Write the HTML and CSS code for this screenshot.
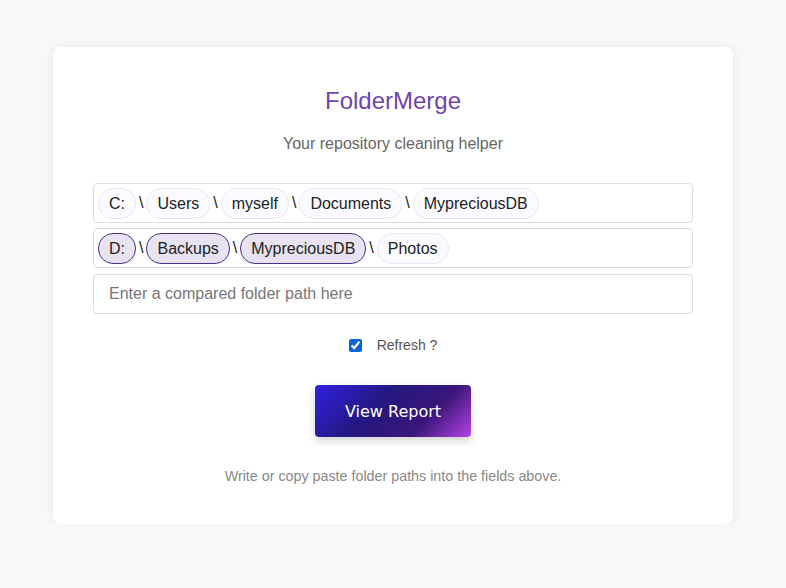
FILE: index.html
```html
<!DOCTYPE html>
<html>
<head>
<meta charset="utf-8">
<link rel="stylesheet" href="styles.css">
</head>
<body>
<main class="card">
  <h1 class="title">FolderMerge</h1>
  <p class="subtitle">Your repository cleaning helper</p>
  <div class="fields">
    <div class="path">
      <span class="chip">C:</span><span class="sep">\</span>
      <span class="chip">Users</span><span class="sep">\</span>
      <span class="chip">myself</span><span class="sep">\</span>
      <span class="chip">Documents</span><span class="sep">\</span>
      <span class="chip">MypreciousDB</span>
    </div>
    <div class="path">
      <span class="chip chip-match">D:</span><span class="sep">\</span>
      <span class="chip chip-match">Backups</span><span class="sep">\</span>
      <span class="chip chip-match">MypreciousDB</span><span class="sep">\</span>
      <span class="chip">Photos</span>
    </div>
    <input class="path-input" type="text" placeholder="Enter a compared folder path here">
  </div>
  <label class="refresh"><input type="checkbox" checked><span>Refresh ?</span></label>
  <button class="report">View Report</button>
  <p class="hint">Write or copy paste folder paths into the fields above.</p>
</main>
</body>
</html>
```

FILE: styles.css
```css
html, body {
  margin: 0;
  padding: 0;
}
body {
  background: #f8f8f8;
  font-family: "Liberation Sans", Arial, sans-serif;
  padding-top: 47px;
}
.card {
  width: 600px;
  margin: 0 0 0 53px;
  background: #fff;
  border-radius: 8px;
  box-shadow: 0 0 10px rgba(0, 0, 0, 0.07);
  padding: 40px 40px 39px;
  display: flex;
  flex-direction: column;
  align-items: center;
}
.title {
  margin: 0;
  font-size: 24px;
  line-height: 28px;
  font-weight: normal;
  color: #7044b0;
}
.subtitle {
  margin: 19px 0 0;
  font-size: 16px;
  line-height: 20px;
  color: #666;
}
.fields {
  align-self: stretch;
  margin-top: 29px;
  display: flex;
  flex-direction: column;
  gap: 5px;
}
.path {
  height: 30px;
  border: 1px solid #dcdcdc;
  border-radius: 4px;
  padding: 4px;
  display: flex;
  align-items: center;
}
.chip {
  height: 28px;
  box-sizing: content-box;
  border: 1px solid #e8e6fa;
  background: #fbfbff;
  border-radius: 15px;
  padding: 1px 10px 0;
  display: inline-flex;
  align-items: center;
  font-size: 16px;
  color: #222;
}
.chip-match {
  border-color: #4a2f8a;
  background: #e7e3f1;
}
.sep {
  margin: 0 3px;
  font-size: 16px;
  color: #222;
}
.path-input {
  margin-top: 1px;
  height: 40px;
  box-sizing: border-box;
  border: 1px solid #dcdcdc;
  border-radius: 4px;
  padding: 0 15px;
  font-family: "Liberation Sans", Arial, sans-serif;
  font-size: 16px;
  color: #222;
  outline: none;
}
.path-input::placeholder {
  color: #777;
}
.refresh {
  margin-top: 23px;
  display: flex;
  align-items: center;
  font-size: 14px;
  color: #555;
}
.refresh input {
  width: 13px;
  height: 13px;
  margin: 0 15px 0 0;
  accent-color: #0a63d6;
}
.report {
  margin-top: 32px;
  width: 156px;
  height: 52px;
  border: none;
  border-radius: 4px;
  background: linear-gradient(135deg, #3022e0 0%, #24177f 40%, #3b1679 70%, #b442e6 100%);
  color: #fff;
  font-family: "DejaVu Sans", Verdana, sans-serif;
  font-size: 16px;
  box-shadow: 0 4px 8px rgba(0, 0, 0, 0.18);
  cursor: pointer;
}
.hint {
  margin: 30px 0 0;
  font-size: 14.3px;
  line-height: 18px;
  color: #888;
}
```
